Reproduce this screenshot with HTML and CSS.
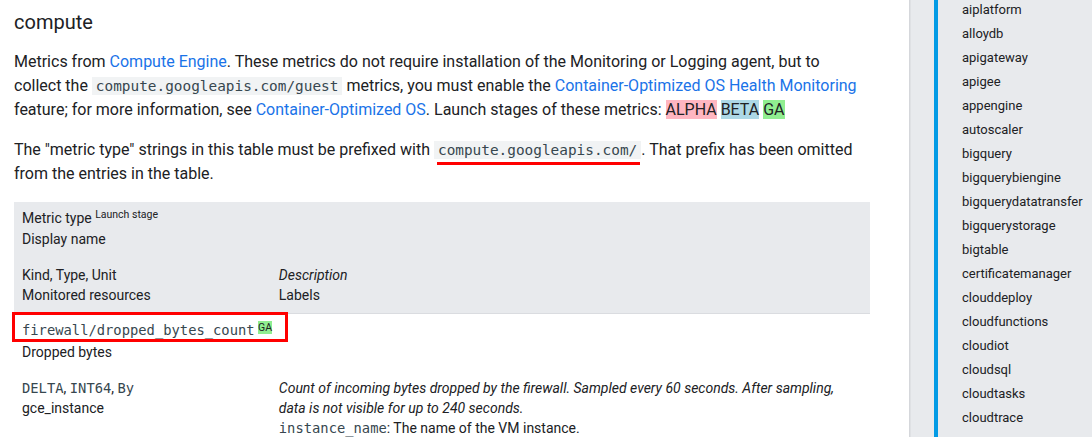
FILE: index.html
```html
<!DOCTYPE html>
<html lang="en">
<head>
<meta charset="utf-8">
<title>compute metrics</title>
<link rel="stylesheet" href="styles.css">
</head>
<body>
<div class="page">
  <main class="content">
    <h2 class="title">compute</h2>
    <p class="para">Metrics from <a href="#" class="link">Compute Engine</a>. These metrics do not require installation of the Monitoring or Logging agent, but to collect the <code class="code">compute.googleapis.com/guest</code> metrics, you must enable the <a href="#" class="link">Container-Optimized OS Health Monitoring</a> feature; for more information, see <a href="#" class="link">Container-Optimized OS</a>. Launch stages of these metrics: <span class="stage alpha">ALPHA</span> <span class="stage beta">BETA</span> <span class="stage ga">GA</span></p>
    <p class="para">The "metric type" strings in this table must be prefixed with <code class="code underlined">compute.googleapis.com/</code>. That prefix has been omitted from the entries in the table.</p>
    <table class="metrics">
      <colgroup><col class="col-kind"><col class="col-desc"></colgroup>
      <thead>
        <tr><th colspan="2" class="th-first"><span class="mt-line">Metric type <sup class="hsup">Launch stage</sup></span>Display name</th></tr>
        <tr class="head-last"><th>Kind, Type, Unit<br>Monitored resources</th><th><em>Description</em><br>Labels</th></tr>
      </thead>
      <tbody>
        <tr><td colspan="2"><div class="metric-name"><code class="tcode">firewall/dropped_bytes_count</code> <sup class="ga-sup">GA</sup></div>Dropped bytes</td></tr>
        <tr><td><code class="tcode">DELTA</code>, <code class="tcode">INT64</code>, <code class="tcode">By</code><br>gce_instance</td><td><em>Count of incoming bytes dropped by the firewall. Sampled every 60 seconds. After sampling, data is not visible for up to 240 seconds.</em><br><code class="tcode">instance_name</code>: The name of the VM instance.</td></tr>
      </tbody>
    </table>
  </main>
  <nav class="sidebar">
    <ul class="toc">
      <li>aiplatform</li>
      <li>alloydb</li>
      <li>apigateway</li>
      <li>apigee</li>
      <li>appengine</li>
      <li>autoscaler</li>
      <li>bigquery</li>
      <li>bigquerybiengine</li>
      <li>bigquerydatatransfer</li>
      <li>bigquerystorage</li>
      <li>bigtable</li>
      <li>certificatemanager</li>
      <li>clouddeploy</li>
      <li>cloudfunctions</li>
      <li>cloudiot</li>
      <li>cloudsql</li>
      <li>cloudtasks</li>
      <li>cloudtrace</li>
    </ul>
  </nav>
</div>
</body>
</html>
```
FILE: styles.css
```css
html, body {
  margin: 0;
  padding: 0;
  background: #ffffff;
}
body {
  font-family: Roboto, "Liberation Sans", sans-serif;
  font-size: 16px;
  line-height: 24px;
  color: #202124;
  height: 437px;
  overflow: hidden;
}
.page {
  display: flex;
  height: 437px;
}
.content {
  flex: 1;
  min-width: 0;
  padding: 0 39px 0 14px;
}
.title {
  margin: 0;
  padding-top: 8px;
  font-size: 20px;
  line-height: 28px;
  font-weight: 400;
  color: #202124;
}
.para {
  margin: 14px 0 0;
}
.para + .para {
  margin-top: 16px;
}
.link {
  color: #1a73e8;
  text-decoration: none;
}
.code {
  font-family: "DejaVu Sans Mono", "Liberation Mono", monospace;
  font-size: 14.4px;
  background: #f1f3f4;
  color: #37474f;
  padding: 1px 4px;
}
.underlined {
  position: relative;
}
.underlined::after {
  content: "";
  position: absolute;
  left: 3px;
  right: 1px;
  top: calc(100% + 3px);
  height: 3px;
  background: #ff0000;
}
.stage {
  color: #202124;
}
.alpha { background: #ffb6c1; }
.beta { background: #add8e6; }
.ga { background: #90ee90; }

.metrics {
  width: 100%;
  margin-top: 16px;
  border-collapse: collapse;
  font-size: 14px;
  line-height: 20px;
}
.col-kind { width: 30%; }
.metrics th {
  background: #e8eaed;
  text-align: left;
  font-weight: 400;
  padding: 8px;
  vertical-align: top;
}
.metrics .th-first {
  padding-top: 6px;
}
.mt-line {
  display: block;
  margin-bottom: 1px;
}
.head-last th {
  border-bottom: 1px solid #dadce0;
}
.hsup {
  font-size: 10.5px;
  line-height: 0;
  vertical-align: 5px;
}
.metrics td {
  padding: 8px;
  vertical-align: top;
}
.tcode {
  font-family: "DejaVu Sans Mono", "Liberation Mono", monospace;
  font-size: 13.8px;
  color: #37474f;
}
.metric-name {
  position: relative;
  margin-top: -2px;
  margin-bottom: 2px;
}
.metric-name::after {
  content: "";
  position: absolute;
  left: -10px;
  top: -8px;
  width: 276px;
  height: 30px;
  border: 3px solid #ff0000;
  box-sizing: border-box;
}
.ga-sup {
  font-size: 10.5px;
  line-height: 0;
  vertical-align: 4px;
  background: #90ee90;
}
.sidebar {
  width: 182px;
  flex: none;
  background: #e8eaed;
  border-left: 1px solid #d5d7db;
  box-shadow: inset 1px 0 0 #dfe1e4;
}
.toc {
  list-style: none;
  margin: -2px 0 0 24px;
  padding: 0 0 0 24px;
  border-left: 4px solid #039be5;
  font-size: 13px;
  line-height: 24px;
  height: 460px;
}
.toc li {
  color: #202124;
  white-space: nowrap;
}
```
